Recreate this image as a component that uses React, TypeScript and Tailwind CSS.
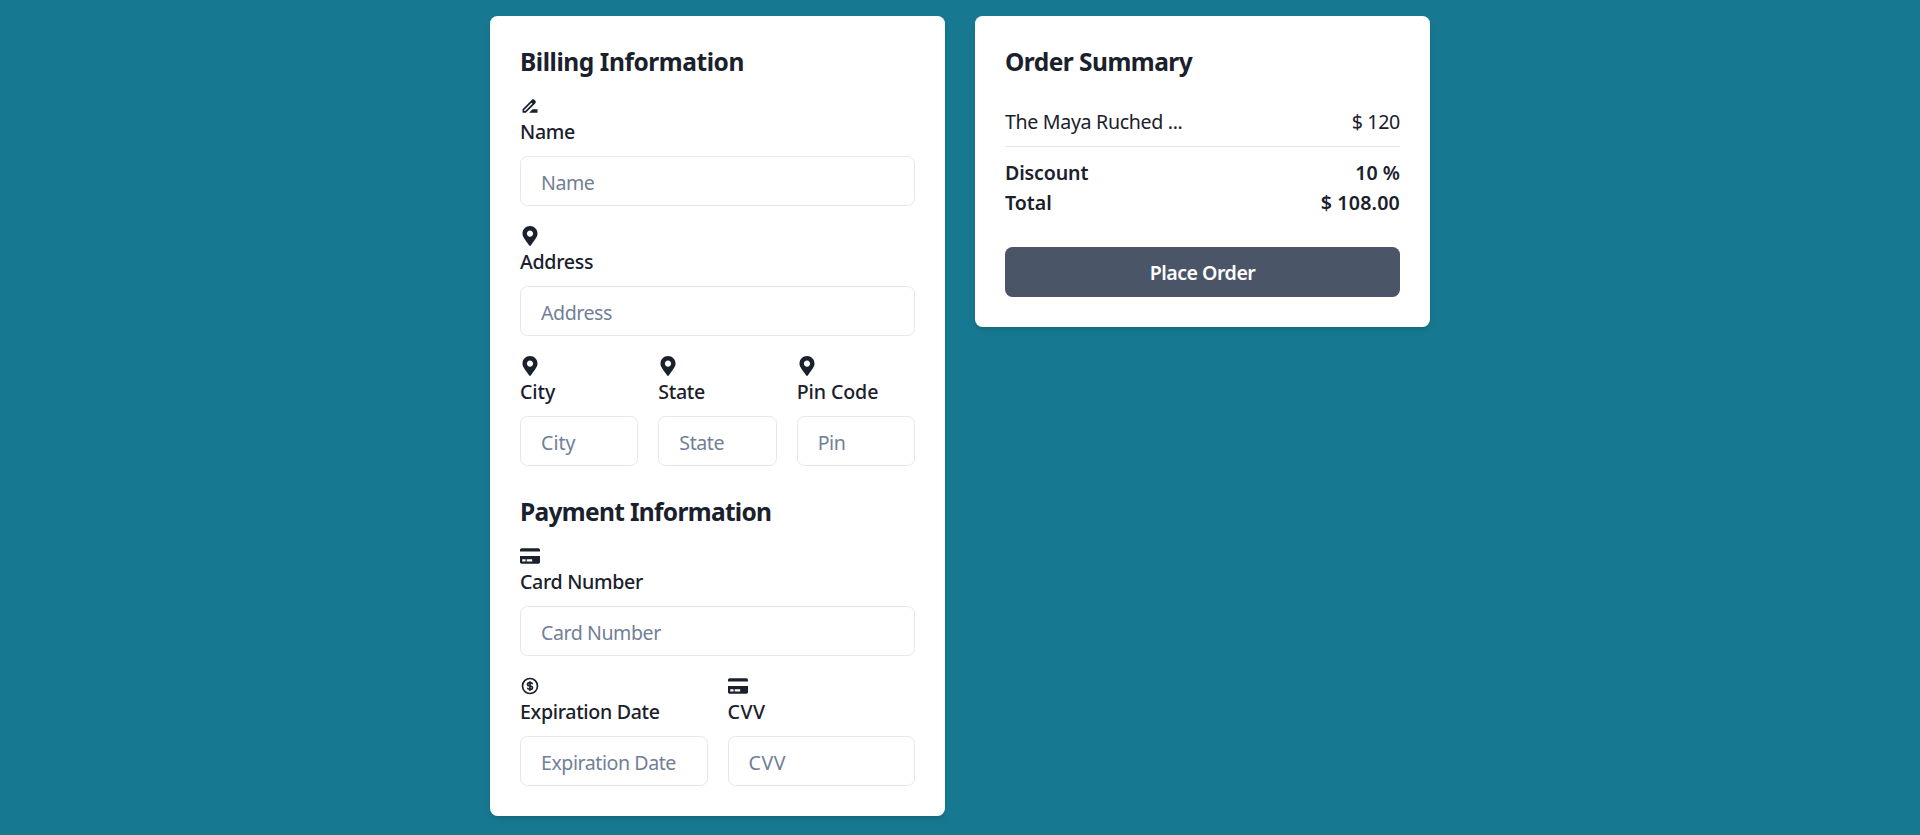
import type { IconType } from 'react-icons';
import { FaCreditCard, FaMapMarkerAlt } from 'react-icons/fa';
import { HiOutlineCurrencyDollar } from 'react-icons/hi';
import { MdDriveFileRenameOutline } from 'react-icons/md';

type FieldProps = {
  icon: IconType;
  label: string;
  placeholder?: string;
  labelClass?: string;
  inputClass?: string;
};

function Field({
  icon: Icon,
  label,
  placeholder = label,
  labelClass = 'tracking-[-0.32px]',
  inputClass = 'tracking-[-0.45px]',
}: FieldProps) {
  return (
    <label className="block min-w-0">
      <Icon size={20} className="block" />
      <span className={`block pt-px text-[19.6px] leading-[30px] font-medium ${labelClass}`}>{label}</span>
      <input
        type="text"
        placeholder={placeholder}
        className={`mt-[9px] block h-[50px] w-full rounded-[7.5px] border border-[#e2e8f0] px-5 pt-0.5 text-[19.6px] outline-none placeholder:text-[#718096] ${inputClass}`}
      />
    </label>
  );
}

function Heading({ children, className = 'tracking-[-0.44px]' }: { children: string; className?: string }) {
  return <h2 className={`pt-px text-[24.5px] leading-[29px] font-bold ${className}`}>{children}</h2>;
}

export default function App() {
  return (
    <main className="flex min-h-screen items-start justify-center gap-[30px] bg-[#177991] pt-4 font-['Noto_Sans',sans-serif] text-[#1a202c]">
      <section className="w-[455px] rounded-[7.5px] bg-white p-[30px] shadow-[0_4px_6px_-1px_rgba(0,0,0,0.1),0_2px_4px_-1px_rgba(0,0,0,0.06)]">
        <Heading>Billing Information</Heading>
        <div className="mt-5 flex flex-col gap-5">
          <Field icon={MdDriveFileRenameOutline} label="Name" />
          <Field icon={FaMapMarkerAlt} label="Address" />
          <div className="grid grid-cols-3 gap-5">
            <Field icon={FaMapMarkerAlt} label="City" labelClass="tracking-[-0.1px]" inputClass="tracking-normal" />
            <Field icon={FaMapMarkerAlt} label="State" />
            <Field icon={FaMapMarkerAlt} label="Pin Code" placeholder="Pin" labelClass="tracking-[-0.1px]" />
          </div>
        </div>
        <div className="mt-[30px]">
          <Heading className="tracking-[-0.68px]">Payment Information</Heading>
        </div>
        <div className="mt-5 flex flex-col gap-5">
          <Field icon={FaCreditCard} label="Card Number" />
          <div className="grid grid-cols-2 gap-5">
            <Field icon={HiOutlineCurrencyDollar} label="Expiration Date" />
            <Field icon={FaCreditCard} label="CVV" labelClass="tracking-[0.5px]" inputClass="tracking-[0.5px]" />
          </div>
        </div>
      </section>

      <section className="w-[455px] rounded-[7.5px] bg-white p-[30px] shadow-[0_4px_6px_-1px_rgba(0,0,0,0.1),0_2px_4px_-1px_rgba(0,0,0,0.06)]">
        <Heading className="tracking-[-0.53px]">Order Summary</Heading>
        <div className="mt-[31px] flex justify-between border-b border-[#e2e8f0] pb-[9px] text-[19.6px] leading-[30px] tracking-[-0.33px]">
          <span>The Maya Ruched ...</span>
          <span>$ 120</span>
        </div>
        <div className="mt-[11px] text-[19.6px] leading-[30px] font-semibold">
          <div className="flex justify-between">
            <span className="tracking-[-0.15px]">Discount</span>
            <span>10 %</span>
          </div>
          <div className="flex justify-between">
            <span>Total</span>
            <span className="tracking-[0.2px]">$ 108.00</span>
          </div>
        </div>
        <button
          type="button"
          className="mt-[29px] h-[50px] w-full rounded-[7.5px] bg-[#4a5568] pt-0.5 text-[19.6px] font-semibold tracking-[-0.5px] text-white"
        >
          Place Order
        </button>
      </section>
    </main>
  );
}
